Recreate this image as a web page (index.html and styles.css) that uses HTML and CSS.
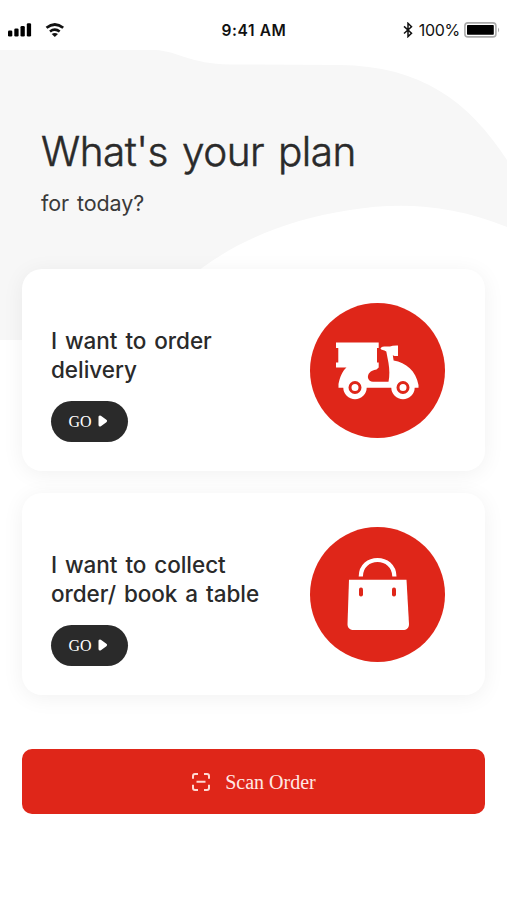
FILE: index.html
```html
<!DOCTYPE html>
<html lang="en">
<head>
  <meta charset="UTF-8" />
  <meta name="viewport" content="width=device-width, initial-scale=1.0"/>
  <title>What's your plan for today?</title>
  <link rel="stylesheet" href="styles.css">
</head>
<body>

  <!-- Background waves -->
  <svg class="waves" viewBox="0 0 507 350">
    <path d="M0 50H155C178 51 190 64 230 64.500L340 65C420 66 468 100 507 160V227C450 204 400 202 350 210C290 219 240 240 202 268L120 340H0Z"/>
  </svg>

  <header class="status-bar">
    <div class="status-left">
      <svg class="signal" viewBox="0 0 24 14">
        <rect x="0" y="7.500" width="4.300" height="6" rx="1.300"/>
        <rect x="6.300" y="5.500" width="4.300" height="8" rx="1.300"/>
        <rect x="12.500" y="3" width="4.300" height="10.500" rx="1.300"/>
        <rect x="18.800" y="0.300" width="4.300" height="13.200" rx="1.300"/>
      </svg>
      <svg class="wifi" viewBox="0 0 20 14">
        <path d="M1.500 4.800Q9.800 -1.800 18.200 4.800M5 8.500Q9.800 4.900 14.700 8.500"/>
        <path class="dot" d="M6.700 11Q9.800 8.900 13 11L9.800 14Z"/>
      </svg>
    </div>
    <div class="time">9:41 AM</div>
    <div class="status-right">
      <svg class="bluetooth" viewBox="0 0 10 16">
        <path d="M1 4.400L8.500 11.200L5 14.600V1.300L8.500 4.700L1 11.500"/>
      </svg>
      <span class="percent">100%</span>
      <svg class="battery" viewBox="0 0 36 16">
        <rect class="case" x="0.900" y="0.900" width="31" height="14" rx="3"/>
        <rect x="3" y="3" width="26.800" height="9.800" rx="0.800"/>
        <path class="tip" d="M34 5.500Q36.300 8 34 10.500Z"/>
      </svg>
    </div>
  </header>

  <main>
    <section class="intro">
      <h1>What's your plan</h1>
      <p>for today?</p>
    </section>

    <section class="card">
      <div class="card-text">
        <h2>I want to order<br>delivery</h2>
        <button class="go">GO
          <svg viewBox="0 0 10 12"><path d="M2 2V10L7.500 6Z"/></svg>
        </button>
      </div>
      <!-- Delivery scooter -->
      <svg class="badge" viewBox="0 0 135 135">
        <circle class="disc" cx="67.500" cy="67.500" r="67.500"/>
        <path d="M26 39.500H68.700V45H67V59.500H68.700V64.500L66.500 66.500C60 67.500 57.500 71 58 75Q59 78.700 63 78.700H78.500C79.800 73 79.500 66 78.500 60L76.300 48.500C74 46.500 71 47.500 70.500 45.500C71 43 76 43.500 80 43.500Q82.500 42.300 88 42.500V53H84.500L82.800 52.200L83.600 57.500C96 59.500 106 68 108.500 82V84.700H28.500V81C30 74 32 68.500 36.500 64.500H26V59.500H28.300V45H26Z"/>
        <circle cx="45" cy="84.500" r="11.700"/>
        <circle cx="93" cy="84.500" r="11.700"/>
        <circle class="wheel" cx="45" cy="84.500" r="5"/>
        <circle class="wheel" cx="93" cy="84.500" r="5"/>
      </svg>
    </section>

    <section class="card">
      <div class="card-text">
        <h2>I want to collect<br>order/ book a table</h2>
        <button class="go">GO
          <svg viewBox="0 0 10 12"><path d="M2 2V10L7.500 6Z"/></svg>
        </button>
      </div>
      <!-- Shopping bag -->
      <svg class="badge" viewBox="0 0 135 135">
        <circle class="disc" cx="67.500" cy="67.500" r="67.500"/>
        <path class="handle" d="M50.800 49.500C51 27.500 84 27.500 84.400 49.500"/>
        <path d="M39 52.700H96.500L99 97C99 101 96.500 103 93 103H44C40 103 37.500 101 37.500 97Z"/>
        <rect class="disc" x="49" y="60.500" width="4" height="9" rx="1.900"/>
        <rect class="disc" x="82" y="60.500" width="4" height="9" rx="1.900"/>
      </svg>
    </section>

    <button class="scan">
      <svg viewBox="0 0 20 20">
        <path d="M2 6.800V4Q2 2 4 2H7M13 2H16Q18 2 18 4V6.800M18 12.800V16Q18 18 16 18H13M7 18H4Q2 18 2 16V12.800M5.500 9.800H14.500"/>
      </svg>
      <span>Scan Order</span>
    </button>
  </main>

</body>
</html>
```
FILE: styles.css
```css
:root {
  --red: #df2619;
  --dark: #2a2a2a;
  --wave: #f7f7f7;
}
* { box-sizing: border-box; }
body {
  margin: 0;
  min-height: 100vh;
  background: #fff;
  color: var(--dark);
  font-family: Inter, 'Liberation Sans', sans-serif;
}

.waves {
  position: absolute;
  top: 0;
  left: 0;
  z-index: -1;
  width: 507px;
  height: 350px;
  fill: var(--wave);
}

/* Status bar */
.status-bar {
  display: grid;
  grid-template-columns: 1fr auto 1fr;
  align-items: center;
  height: 50px;
  padding: 11px 7px 0 8px;
  color: #111;
}
.status-left,
.status-right {
  display: flex;
  align-items: center;
}
.status-left { margin-top: -2px; }
.status-right {
  justify-content: flex-end;
  margin-top: -1px;
}
.signal {
  width: 24px;
  height: 14px;
}
.wifi {
  width: 20px;
  height: 14px;
  margin-left: 13px;
  fill: none;
  stroke: #111;
  stroke-width: 2.7;
}
.wifi .dot {
  fill: #111;
  stroke: none;
}
.time {
  font-size: 15.5px;
  font-weight: 600;
  letter-spacing: 0.6px;
}
.bluetooth {
  width: 10px;
  height: 16px;
  fill: none;
  stroke: #111;
  stroke-width: 1.5;
}
.percent {
  margin: 0 4px 0 6px;
  font-size: 16px;
  letter-spacing: -0.3px;
}
.battery {
  width: 36px;
  height: 16px;
}
.battery .case {
  fill: none;
  stroke: #aaa;
  stroke-width: 1.6;
}
.battery .tip { fill: #aaa; }

main { padding: 0 22px; }

/* Heading */
.intro {
  height: 219px;
  padding: 77px 0 0 19px;
}
.intro h1 {
  margin: 0;
  font-size: 40.5px;
  font-weight: 300;
  line-height: 50px;
  letter-spacing: -0.5px;
  word-spacing: 3px;
  white-space: nowrap;
  -webkit-text-stroke: 0.5px var(--dark);
}
.intro p {
  margin: 12px 0 0;
  font-size: 21.5px;
  line-height: 28px;
  letter-spacing: -0.1px;
  word-spacing: 2px;
  color: #3a3a3a;
}

/* Option cards */
.card {
  display: flex;
  justify-content: space-between;
  align-items: center;
  height: 202px;
  margin-bottom: 22px;
  padding: 0 40px 0 29px;
  background: #fff;
  border-radius: 20px;
  box-shadow: 0 3px 22px rgba(0, 0, 0, 0.06);
}
.card-text { padding-top: 29px; }
.card h2 {
  margin: 0 0 17px;
  font-size: 22.5px;
  font-weight: 500;
  line-height: 28.5px;
  letter-spacing: -0.05px;
  word-spacing: 2px;
  white-space: nowrap;
}
.go {
  display: flex;
  justify-content: center;
  align-items: center;
  gap: 6px;
  width: 77px;
  height: 41px;
  padding: 0 3px 0 0;
  border: 0;
  border-radius: 21px;
  background: var(--dark);
  color: #fff;
  font: 16px 'Liberation Serif', serif;
}
.go svg {
  width: 10px;
  height: 12px;
  margin-top: -2px;
  fill: #fff;
  stroke: #fff;
  stroke-width: 3;
  stroke-linejoin: round;
}
.badge {
  flex: none;
  width: 135px;
  height: 135px;
  fill: #fff;
}
.badge .disc { fill: var(--red); }
.badge .wheel {
  fill: #fff;
  stroke: var(--red);
  stroke-width: 3;
}
.badge .handle {
  fill: none;
  stroke: #fff;
  stroke-width: 4.2;
}

/* Scan button */
.scan {
  display: flex;
  justify-content: center;
  align-items: center;
  gap: 14px;
  width: 100%;
  height: 65px;
  margin-top: 54px;
  padding: 0;
  border: 0;
  border-radius: 10px;
  background: var(--red);
  color: #ffe9e5;
  font: 20px 'Liberation Serif', serif;
}
.scan span { padding-top: 2px; }
.scan svg {
  width: 20px;
  height: 20px;
  fill: none;
  stroke: #ffd9d3;
  stroke-width: 2;
}
```
